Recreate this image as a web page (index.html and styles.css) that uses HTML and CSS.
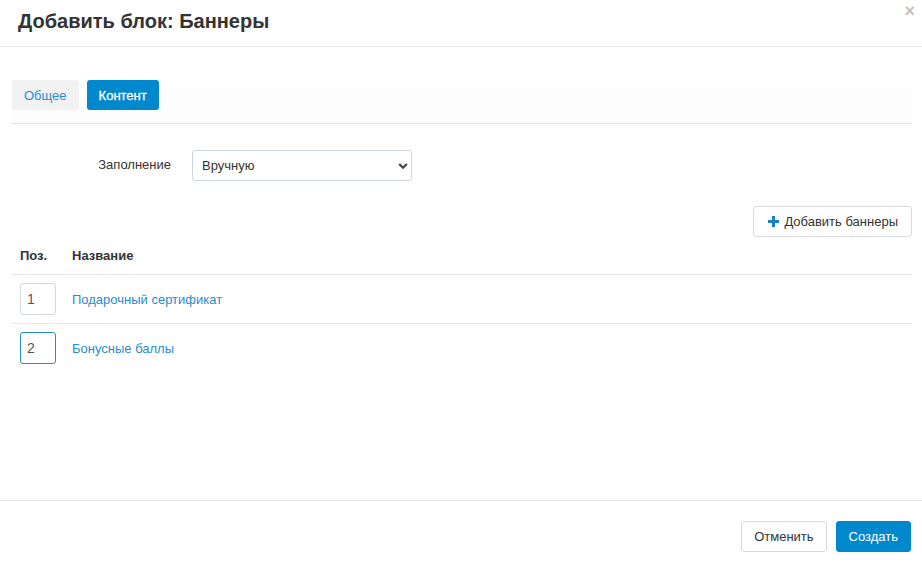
FILE: index.html
```html
<!DOCTYPE html>
<html lang="ru">
<head>
<meta charset="utf-8">
<title>Добавить блок: Баннеры</title>
<link rel="stylesheet" href="styles.css">
</head>
<body>
<div class="modal">
  <div class="modal-header">
    <h1 class="modal-title">Добавить блок: Баннеры</h1>
    <span class="close">&times;</span>
  </div>
  <div class="modal-body">
    <div class="tabs">
      <button class="tab">Общее</button>
      <button class="tab active">Контент</button>
    </div>
    <div class="form-row">
      <label class="form-label">Заполнение</label>
      <div class="select-wrap">
        <select class="select"><option>Вручную</option></select>
        <svg class="chevron" width="10" height="8" viewBox="0 0 10 8"><path d="M1.2 2 L5 5.8 L8.8 2" fill="none" stroke="#444" stroke-width="2.2"/></svg>
      </div>
    </div>
    <div class="actions">
      <button class="btn add-btn">
        <svg class="plus" width="11" height="11" viewBox="0 0 11 11"><path d="M4 0h3v4h4v3H7v4H4V7H0V4h4z" fill="#1a7fc4"/></svg>
        Добавить баннеры
      </button>
    </div>
    <div class="table">
      <div class="row head">
        <div>Поз.</div>
        <div>Название</div>
      </div>
      <div class="row">
        <div><input class="pos" value="1"></div>
        <div><a class="link" href="#">Подарочный сертификат</a></div>
      </div>
      <div class="row last">
        <div><input class="pos focus" value="2"></div>
        <div><a class="link" href="#">Бонусные баллы</a></div>
      </div>
    </div>
  </div>
  <div class="modal-footer">
    <button class="btn footer-btn">Отменить</button>
    <button class="btn primary footer-btn">Создать</button>
  </div>
</div>
</body>
</html>
```
FILE: styles.css
```css
html, body {
  margin: 0;
  height: 100%;
  background: #fff;
}
body {
  font-family: "Liberation Sans", Arial, sans-serif;
  font-size: 13px;
  color: #333;
}
.modal {
  position: relative;
  height: 570px;
  display: flex;
  flex-direction: column;
}
.modal-header {
  padding: 9px 18px 13px;
  border-bottom: 1px solid #e8e8e8;
}
.modal-title {
  margin: 0;
  font-size: 20px;
  line-height: 24px;
  font-weight: bold;
  color: #333;
}
.close {
  position: absolute;
  top: 1px;
  right: 7px;
  font-size: 18px;
  font-weight: bold;
  color: #c4c4c4;
  line-height: 20px;
}
.modal-body {
  flex: 1;
  padding: 0 10px 0 12px;
}
.tabs {
  display: flex;
  gap: 8px;
  padding: 33px 0 13px;
  border-bottom: 1px solid #dfe3e8;
  background: linear-gradient(#fff 0%, #fff 40%, #fdfdfd 60%, #fdfdfd 100%);
}
.tab {
  height: 30px;
  padding: 0 12px;
  border: 0;
  border-radius: 3px;
  font-family: inherit;
  font-size: 13px;
  background: #f2f2f2;
  color: #2a8bd0;
}
.tab.active {
  background: #0088cc;
  color: #fff;
  font-weight: normal;
  -webkit-text-stroke: 0.3px #fff;
}
.form-row {
  display: flex;
  align-items: center;
  margin-top: 26px;
}
.form-label {
  width: 159px;
  text-align: right;
  padding-right: 21px;
  margin-top: -3px;
}
.select-wrap {
  position: relative;
}
.select {
  appearance: none;
  -webkit-appearance: none;
  width: 220px;
  height: 31px;
  border: 1px solid #cfd6dd;
  border-radius: 3px;
  background: #fff;
  padding: 0 9px;
  font-family: inherit;
  font-size: 13px;
  color: #333;
}
.chevron {
  position: absolute;
  right: 4px;
  top: 12px;
}
.actions {
  display: flex;
  justify-content: flex-end;
  margin-top: 25px;
}
.btn {
  display: inline-flex;
  align-items: center;
  gap: 5px;
  height: 31px;
  padding: 0 12px;
  border: 1px solid #d6dbe0;
  border-radius: 3px;
  background: #fff;
  font-family: inherit;
  font-size: 13px;
  color: #333;
}
.add-btn {
  padding: 0 13px 0 14px;
}
.plus {
  margin-top: -1px;
}
.row {
  display: grid;
  grid-template-columns: 52px 1fr;
  align-items: center;
  padding-left: 8px;
  height: 48px;
  border-bottom: 1px solid #e8e8e8;
}
.row.head {
  height: 37px;
  font-weight: bold;
}
.row.last {
  border-bottom: 0;
}
.pos {
  box-sizing: border-box;
  width: 36px;
  height: 32px;
  border: 1px solid #d3d9df;
  border-radius: 3px;
  padding: 0 6px;
  font-family: inherit;
  font-size: 14px;
  color: #555;
  display: block;
}
.pos.focus {
  border-color: #2a8bd0;
}
.link {
  color: #2a8bd0;
  text-decoration: none;
}
.modal-footer {
  display: flex;
  justify-content: flex-end;
  gap: 9px;
  padding: 20px 11px 18px 12px;
  border-top: 1px solid #e8e8e8;
}
.footer-btn {
  padding: 0 12px;
}
.btn.primary {
  background: #0088cc;
  border-color: #0088cc;
  color: #fff;
}
```
